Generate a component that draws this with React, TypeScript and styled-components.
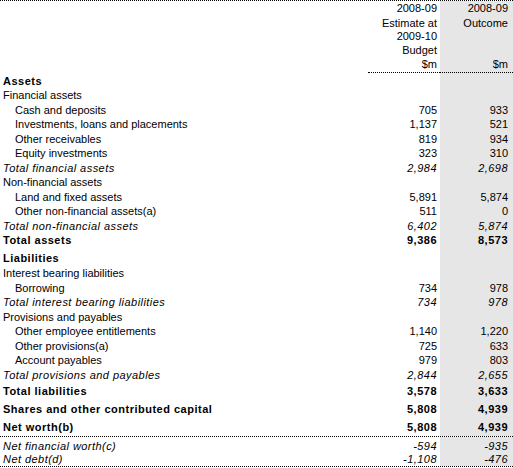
import React from "react";
import styled, { createGlobalStyle, css } from "styled-components";

const Global = createGlobalStyle`
  html, body { margin: 0; padding: 0; background: #fff; }
  body { font-family: "Liberation Sans", Arial, sans-serif; color: #000; }
`;

type Kind = "head" | "section" | "group" | "item" | "total" | "grand";

const Table = styled.div`
  width: 513px;
  border-top: 1px dotted #000;
  font-size: 11px;
`;

const Row = styled.div<{ $pt?: number; $lh?: number; $pb?: number; $rule?: boolean }>`
  display: grid;
  grid-template-columns: 368px 72px 73px;
  line-height: ${(p) => p.$lh ?? 14.5}px;
  ${(p) => p.$rule && css`border-bottom: 1px dotted #000;`}
  & > * {
    padding-top: ${(p) => p.$pt ?? 0}px;
    padding-bottom: ${(p) => p.$pb ?? 0}px;
  }
`;

const kindText = (k: Kind) => {
  switch (k) {
    case "section":
    case "grand":
      return css`font-weight: 700; letter-spacing: 0.5px;`;
    case "total":
      return css`font-style: italic; letter-spacing: 0.45px;`;
    default:
      return css``;
  }
};

const Label = styled.div<{ $kind: Kind }>`
  padding-left: ${(p) => (p.$kind === "item" ? 15 : 3)}px;
  white-space: nowrap;
  ${(p) => kindText(p.$kind)}
`;

const Num = styled.div<{ $kind: Kind; $shade?: boolean; $rule?: boolean }>`
  text-align: right;
  white-space: nowrap;
  padding-right: ${(p) => (p.$shade ? 5 : 3)}px;
  background: ${(p) => (p.$shade ? "#e6e6e6" : "transparent")};
  ${(p) => p.$rule && css`border-bottom: 1px dotted #000;`}
  ${(p) => kindText(p.$kind)}
`;

type Line = {
  label: string;
  kind: Kind;
  est?: string;
  out?: string;
  pt?: number;
  pb?: number;
  lh?: number;
  rule?: boolean;
};

const header: { est: string; out: string; lh: number; rule?: boolean }[] = [
  { est: "2008-09", out: "2008-09", lh: 15 },
  { est: "Estimate at", out: "Outcome", lh: 14 },
  { est: "2009-10", out: "", lh: 13.5 },
  { est: "Budget", out: "", lh: 13.5 },
  { est: "$m", out: "$m", lh: 14.5, rule: true },
];

const rows: Line[] = [
  { label: "Assets", kind: "section", pt: 1.25 },
  { label: "Financial assets", kind: "group" },
  { label: "Cash and deposits", kind: "item", est: "705", out: "933" },
  { label: "Investments, loans and placements", kind: "item", est: "1,137", out: "521" },
  { label: "Other receivables", kind: "item", est: "819", out: "934" },
  { label: "Equity investments", kind: "item", est: "323", out: "310" },
  { label: "Total financial assets", kind: "total", est: "2,984", out: "2,698" },
  { label: "Non-financial assets", kind: "group" },
  { label: "Land and fixed assets", kind: "item", est: "5,891", out: "5,874" },
  { label: "Other non-financial assets(a)", kind: "item", est: "511", out: "0" },
  { label: "Total non-financial assets", kind: "total", est: "6,402", out: "5,874" },
  { label: "Total assets", kind: "grand", est: "9,386", out: "8,573" },
  { label: "Liabilities", kind: "section", pt: 3 },
  { label: "Interest bearing liabilities", kind: "group", pt: 1 },
  { label: "Borrowing", kind: "item", est: "734", out: "978" },
  { label: "Total interest bearing liabilities", kind: "total", est: "734", out: "978" },
  { label: "Provisions and payables", kind: "group" },
  { label: "Other employee entitlements", kind: "item", est: "1,140", out: "1,220" },
  { label: "Other provisions(a)", kind: "item", est: "725", out: "633" },
  { label: "Account payables", kind: "item", est: "979", out: "803" },
  { label: "Total provisions and payables", kind: "total", est: "2,844", out: "2,655" },
  { label: "Total liabilities", kind: "grand", est: "3,578", out: "3,633", pt: 2 },
  { label: "Shares and other contributed capital", kind: "grand", est: "5,808", out: "4,939", pt: 3 },
  { label: "Net worth(b)", kind: "grand", est: "5,808", out: "4,939", pt: 3.5, pb: 2, rule: true },
  { label: "Net financial worth(c)", kind: "total", est: "-594", out: "-935", pt: 2.5, lh: 13 },
  { label: "Net debt(d)", kind: "total", est: "-1,108", out: "-476", lh: 13, rule: true },
];

export default function App() {
  return (
    <>
      <Global />
      <Table>
        {header.map((h, i) => (
          <Row key={"h" + i} $lh={h.lh}>
            <Label $kind="head" />
            <Num $kind="head" $rule={h.rule}>{h.est}</Num>
            <Num $kind="head" $shade $rule={h.rule}>{h.out}</Num>
          </Row>
        ))}
        {rows.map((r, i) => (
          <Row key={i} $pt={r.pt} $pb={r.pb} $lh={r.lh} $rule={r.rule}>
            <Label $kind={r.kind}>{r.label}</Label>
            <Num $kind={r.kind}>{r.est ?? ""}</Num>
            <Num $kind={r.kind} $shade>{r.out ?? ""}</Num>
          </Row>
        ))}
      </Table>
    </>
  );
}
